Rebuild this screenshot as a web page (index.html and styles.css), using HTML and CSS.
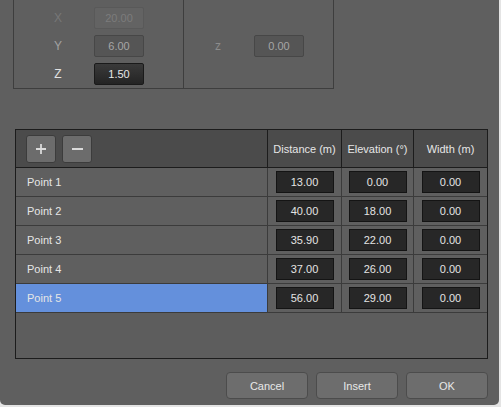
FILE: index.html
```html
<!DOCTYPE html>
<html>
<head>
<meta charset="utf-8">
<link rel="stylesheet" href="styles.css">
</head>
<body>
<div class="window">
  <div class="group">
    <div class="col col-left">
      <div class="prow disabled"><span class="plabel">X</span><span class="pfield">20.00</span></div>
      <div class="prow inactive"><span class="plabel">Y</span><span class="pfield">6.00</span></div>
      <div class="prow active"><span class="plabel">Z</span><span class="pfield">1.50</span></div>
    </div>
    <div class="col col-right">
      <div class="prow inactive"><span class="plabel lower">z</span><span class="pfield">0.00</span></div>
    </div>
  </div>

  <div class="table">
    <div class="trow thead">
      <div class="cell first tools">
        <span class="tbtn"><svg width="10" height="10" viewBox="0 0 10 10"><path d="M5 0V10M0 5H10" stroke="#dadada" stroke-width="1.8" fill="none"/></svg></span>
        <span class="tbtn"><svg width="11" height="10" viewBox="0 0 11 10"><path d="M0 5H11" stroke="#dadada" stroke-width="1.8" fill="none"/></svg></span>
      </div>
      <div class="cell">Distance (m)</div>
      <div class="cell">Elevation (°)</div>
      <div class="cell">Width (m)</div>
    </div>
    <div class="trow">
      <div class="cell first">Point 1</div>
      <div class="cell"><span class="num">13.00</span></div>
      <div class="cell"><span class="num">0.00</span></div>
      <div class="cell"><span class="num">0.00</span></div>
    </div>
    <div class="trow">
      <div class="cell first">Point 2</div>
      <div class="cell"><span class="num">40.00</span></div>
      <div class="cell"><span class="num">18.00</span></div>
      <div class="cell"><span class="num">0.00</span></div>
    </div>
    <div class="trow">
      <div class="cell first">Point 3</div>
      <div class="cell"><span class="num">35.90</span></div>
      <div class="cell"><span class="num">22.00</span></div>
      <div class="cell"><span class="num">0.00</span></div>
    </div>
    <div class="trow">
      <div class="cell first">Point 4</div>
      <div class="cell"><span class="num">37.00</span></div>
      <div class="cell"><span class="num">26.00</span></div>
      <div class="cell"><span class="num">0.00</span></div>
    </div>
    <div class="trow selected">
      <div class="cell first">Point 5</div>
      <div class="cell"><span class="num">56.00</span></div>
      <div class="cell"><span class="num">29.00</span></div>
      <div class="cell"><span class="num">0.00</span></div>
    </div>
  </div>

  <div class="actions">
    <span class="btn">Cancel</span>
    <span class="btn">Insert</span>
    <span class="btn">OK</span>
  </div>
</div>
</body>
</html>
```
FILE: styles.css
```css
html, body {
  margin: 0;
  padding: 0;
  background: #e4e4e4;
}
body {
  font-family: "Liberation Sans", Arial, sans-serif;
  font-size: 11px;
  color: #e6e6e6;
}
.window {
  width: 499px;
  height: 405px;
  background: #5f5f5f;
  border-radius: 0 0 5px 5px;
  box-sizing: border-box;
  padding: 0 11px 0 0;
  display: flex;
  flex-direction: column;
  overflow: hidden;
}
.group {
  margin-left: 13px;
  width: 321px;
  height: 89px;
  box-sizing: border-box;
  border: 1px solid #3e3e3e;
  border-top: none;
  display: flex;
}
.col {
  box-sizing: border-box;
  display: flex;
  flex-direction: column;
  gap: 6px;
  padding-top: 7px;
}
.col-left {
  width: 170px;
  border-right: 1px solid #3e3e3e;
}
.col-right {
  flex: 1;
  padding-top: 35px;
}
.prow {
  display: flex;
  align-items: center;
  height: 22px;
}
.plabel {
  width: 40px;
  margin-left: 24px;
  margin-right: 16px;
  text-align: center;
  font-size: 12px;
}
.col-right .plabel {
  margin-left: 14px;
}
.pfield {
  width: 50px;
  height: 22px;
  box-sizing: border-box;
  border-radius: 2px;
  display: flex;
  align-items: center;
  justify-content: center;
}
.disabled .plabel { color: #777777; }
.disabled .pfield {
  background: #636363;
  border: 1px solid #595959;
  color: #7c7c7c;
}
.inactive .plabel { color: #a2a2a2; }
.inactive .pfield {
  background: #555555;
  border: 1px solid #474747;
  color: #a6a6a6;
}
.col-right .inactive .plabel { color: #8c8c8c; }
.active .plabel { color: #e2e2e2; }
.active .pfield {
  background: linear-gradient(#3a3a3a, #242424);
  border: 1px solid #1a1a1a;
  color: #e8e8e8;
}

.table {
  margin-top: 40px;
  margin-left: 15px;
  width: 473px;
  height: 230px;
  box-sizing: border-box;
  border: 1px solid #1c1c1c;
  background: #5d5d5d;
}
.trow {
  display: grid;
  grid-template-columns: 251px 74px 72px 74px;
  height: 29px;
  box-sizing: border-box;
  border-bottom: 1px solid #3b3b3b;
  background: #5f5f5f;
}
.trow.thead {
  height: 38px;
  background: #4b4b4b;
  border-bottom: 1px solid #1c1c1c;
}
.cell {
  display: flex;
  align-items: center;
  justify-content: center;
  border-left: 1px solid #3b3b3b;
  color: #e6e6e6;
}
.thead .cell {
  border-left-color: #1c1c1c;
}
.cell.first {
  border-left: none;
  justify-content: flex-start;
  padding-left: 11px;
}
.cell.tools {
  gap: 6px;
  padding-left: 10px;
}
.tbtn {
  width: 30px;
  height: 28px;
  box-sizing: border-box;
  background: #6c6c6c;
  border: 1px solid #3c3c3c;
  border-radius: 3px;
  display: flex;
  align-items: center;
  justify-content: center;
}
.num {
  width: 58px;
  height: 22px;
  box-sizing: border-box;
  background: #272727;
  border: 1px solid #141414;
  display: flex;
  align-items: center;
  justify-content: center;
  color: #e4e4e4;
}
.trow.selected .cell.first {
  background: #6490dc;
}

.actions {
  margin-top: 13px;
  display: flex;
  justify-content: flex-end;
  gap: 8px;
}
.btn {
  width: 82px;
  height: 27px;
  box-sizing: border-box;
  background: #6d6d6d;
  border: 1px solid #4c4c4c;
  border-radius: 4px;
  display: flex;
  align-items: center;
  justify-content: center;
  color: #e8e8e8;
}
```
